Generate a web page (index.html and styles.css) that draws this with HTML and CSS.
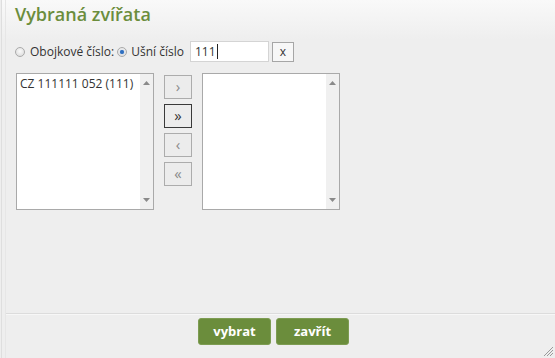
FILE: index.html
```html
<!DOCTYPE html>
<html lang="cs">
<head>
<meta charset="utf-8">
<title>Vybraná zvířata</title>
<link rel="stylesheet" href="styles.css">
</head>
<body>
<div class="dialog">
  <div class="frame">
    <div class="titlebar"><span class="title">Vybraná zvířata</span></div>
    <div class="content">
      <div class="filter-row">
        <span class="radio"></span>
        <span class="label l1">Obojkové číslo:</span>
        <span class="radio checked"></span>
        <span class="label l2">Ušní číslo</span>
        <div class="textbox">111<span class="caret"></span></div>
        <div class="clear-btn">x</div>
      </div>
      <div class="lists">
        <div class="listbox">
          <div class="options">
            <div class="option">CZ 111111 052 (111)</div>
          </div>
          <div class="scrollbar">
            <svg class="arr" width="7" height="4" viewBox="0 0 7 4"><path d="M0 4 L3.5 0 L7 4Z" fill="#8a8a8a"/></svg>
            <svg class="arr" width="7" height="4" viewBox="0 0 7 4"><path d="M0 0 L3.5 4 L7 0Z" fill="#8a8a8a"/></svg>
          </div>
        </div>
        <div class="movers">
          <div class="mv">&rsaquo;</div>
          <div class="mv focused">&raquo;</div>
          <div class="mv">&lsaquo;</div>
          <div class="mv">&laquo;</div>
        </div>
        <div class="listbox">
          <div class="options"></div>
          <div class="scrollbar">
            <svg class="arr" width="7" height="4" viewBox="0 0 7 4"><path d="M0 4 L3.5 0 L7 4Z" fill="#8a8a8a"/></svg>
            <svg class="arr" width="7" height="4" viewBox="0 0 7 4"><path d="M0 0 L3.5 4 L7 0Z" fill="#8a8a8a"/></svg>
          </div>
        </div>
      </div>
    </div>
    <div class="footer">
      <div class="btnset">
        <div class="gbtn">vybrat</div>
        <div class="gbtn">zavřít</div>
      </div>
    </div>
  </div>
  <svg class="grip" width="12" height="12" viewBox="0 0 12 12">
    <path d="M11 2 L2 11 M11 5 L5 11 M11 8 L8 11" stroke="#9a9a9a" stroke-width="1"/>
  </svg>
</div>
</body>
</html>
```
FILE: styles.css
```css
html, body {
  margin: 0;
  padding: 0;
}
body {
  width: 555px;
  height: 358px;
  overflow: hidden;
  background: #eeeeee;
  font-family: "Open Sans", "Liberation Sans", sans-serif;
  font-size: 12px;
  color: #333;
}
.dialog {
  position: relative;
  box-sizing: border-box;
  height: 358px;
  margin-left: 1px;
  border-left: 1px solid #dedede;
  background: linear-gradient(#f9f9f9 0, #eeeeee 40px);
}
.frame {
  box-sizing: border-box;
  height: 358px;
  margin-left: 3px;
  border-left: 1px solid #e6e6e6;
  display: flex;
  flex-direction: column;
}
.titlebar {
  height: 32px;
  box-sizing: border-box;
  padding: 2px 0 0 9px;
}
.title {
  font-size: 18px;
  line-height: 24px;
  font-weight: 600;
  color: #6b8d3c;
}
.content {
  flex: 1;
}
.filter-row {
  margin-top: 9px;
  padding-left: 9px;
  height: 21px;
  display: flex;
  align-items: center;
}
.radio {
  box-sizing: border-box;
  width: 10px;
  height: 10px;
  border-radius: 50%;
  border: 1px solid #aaaaaa;
  background: radial-gradient(circle at 50% 40%, #fafafa 0, #dedede 80%);
  display: flex;
  align-items: center;
  justify-content: center;
}
.radio.checked::after {
  content: "";
  width: 4px;
  height: 4px;
  border-radius: 50%;
  background: #2f6fc0;
  box-shadow: 0 0 1px #5a8fd6;
}
.label {
  line-height: 21px;
  color: #333;
}
.l1 {
  margin-left: 5px;
  margin-right: 3px;
}
.l2 {
  margin-left: 4px;
  margin-right: 6px;
}
.textbox {
  box-sizing: border-box;
  width: 79px;
  height: 21px;
  border: 1px solid #d4d4d4;
  background: #fff;
  padding-left: 4px;
  line-height: 19px;
  color: #333;
  display: flex;
  align-items: center;
}
.caret {
  width: 1px;
  height: 15px;
  background: #222;
  margin-left: 1px;
}
.clear-btn {
  box-sizing: border-box;
  width: 22px;
  height: 20px;
  margin-left: 3px;
  border: 1px solid #a6a6a6;
  background: #f7f7f7;
  text-align: center;
  line-height: 17px;
  font-size: 12px;
  color: #333;
}
.lists {
  margin-top: 11px;
  padding-left: 10px;
  display: flex;
  align-items: flex-start;
  gap: 10px;
}
.listbox {
  box-sizing: border-box;
  width: 138px;
  height: 137px;
  border: 1px solid #a9a9a9;
  background: #fff;
  display: flex;
}
.options {
  flex: 1;
  padding: 2px 0 0 3px;
}
.option {
  line-height: 16px;
  color: #333;
  white-space: nowrap;
}
.scrollbar {
  width: 13px;
  background: #f0f0f0;
  display: flex;
  flex-direction: column;
  justify-content: space-between;
  align-items: center;
  padding: 7px 0 7px;
  box-sizing: border-box;
}
.arr {
  display: block;
}
.movers {
  margin-top: 2px;
  display: flex;
  flex-direction: column;
  gap: 5px;
}
.mv {
  box-sizing: border-box;
  width: 28px;
  height: 24px;
  border: 1px solid #acacac;
  background: #ececec;
  color: #8a8a8a;
  text-align: center;
  font-size: 15px;
  line-height: 20px;
}
.mv.focused {
  border-color: #3a3a3a;
  color: #333;
}
.footer {
  height: 45px;
  box-sizing: border-box;
  border-top: 1px solid #dcdcdc;
  box-shadow: inset 0 1px 0 #f7f7f7;
  padding: 4px 9px 0 0;
  display: flex;
  justify-content: center;
}
.btnset {
  display: flex;
}
.gbtn {
  box-sizing: border-box;
  width: 73px;
  height: 27px;
  margin-right: 5px;
  border: 1px solid #7d9c52;
  border-radius: 3px;
  background: #6b8d3c;
  color: #fff;
  font-weight: 700;
  font-size: 13px;
  line-height: 24px;
  text-align: center;
}
.grip {
  position: absolute;
  right: 1px;
  bottom: 1px;
}
```
